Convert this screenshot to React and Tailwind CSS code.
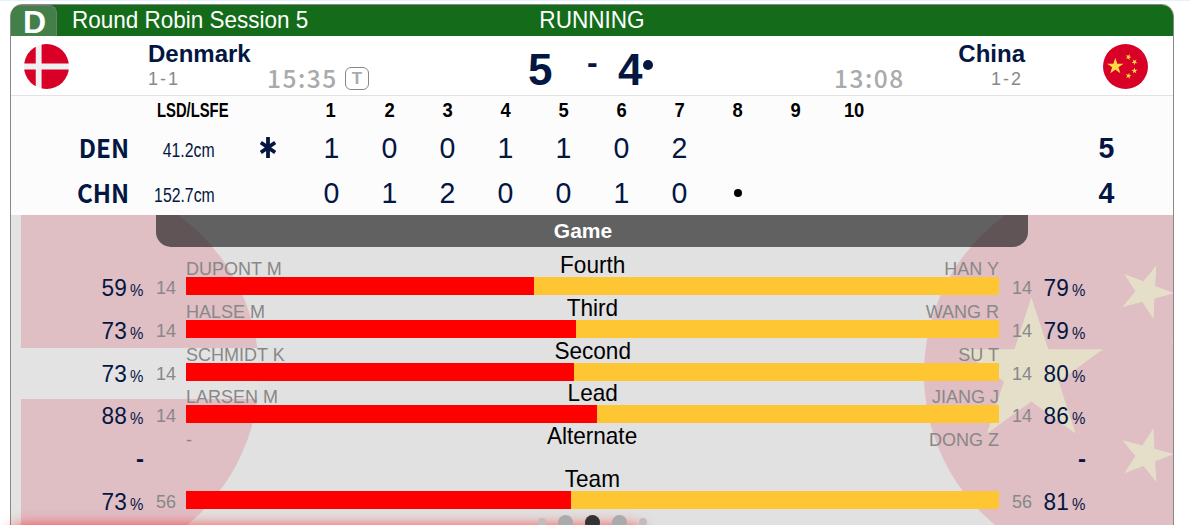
const ends = [1, 2, 3, 4, 5, 6, 7, 8, 9, 10];

const teams = [
  { code: "DEN", lsd: "41.2cm", hammer: true, scores: ["1", "0", "0", "1", "1", "0", "2", "", "", ""], total: 5 },
  { code: "CHN", lsd: "152.7cm", hammer: false, scores: ["0", "1", "2", "0", "0", "1", "0", "•", "", ""], total: 4 },
];

const rows = [
  { label: "Fourth", left: "DUPONT M", right: "HAN Y", shots: 14, a: 59, b: 79 },
  { label: "Third", left: "HALSE M", right: "WANG R", shots: 14, a: 73, b: 79 },
  { label: "Second", left: "SCHMIDT K", right: "SU T", shots: 14, a: 73, b: 80 },
  { label: "Lead", left: "LARSEN M", right: "JIANG J", shots: 14, a: 88, b: 86 },
  { label: "Alternate", left: "-", right: "DONG Z" },
  { label: "Team", left: "", right: "", shots: 56, a: 73, b: 81 },
];

function DenmarkFlag({ className }) {
  return (
    <svg viewBox="0 0 512 512" className={className}>
      <clipPath id="dk">
        <circle cx="256" cy="256" r="256" />
      </clipPath>
      <g clipPath="url(#dk)">
        <rect width="512" height="512" fill="#f0f0f0" />
        <path
          fill="#d80027"
          d="M0 0h133.6v222.6H0zM200.3 0H512v222.6H200.3zM0 289.4h133.6V512H0zM200.3 289.4H512V512H200.3z"
        />
      </g>
    </svg>
  );
}

function ChinaFlag({ className }) {
  return (
    <svg viewBox="0 0 512 512" className={className}>
      <circle cx="256" cy="256" r="256" fill="#d80027" />
      <g fill="#ffda44">
        <path d="M140.2 155.8l22.1 68h71.5l-57.9 42 22.1 68-57.8-42-57.9 42 22.1-68-57.8-42h71.5z" />
        <path d="M303.5 396.8l-16.9-20.7-25 9.6 14.5-22.5-16.9-20.8 25.9 6.9 14.5-22.5 1.4 26.8 25.9 6.9-25 9.6z" />
        <path d="M338 335.2l7.4-25.8-22.2-14.9 26.8-.4 7.3-25.8 8.6 25.4 26.8-.4-21.4 16.1 8.6 25.4-21.9-15.5z" />
        <path d="M338 175.8l7.4 25.8-22.2 14.9 26.8.4 7.3 25.8 8.6-25.4 26.8.4-21.4-16.1 8.6-25.4-21.9 15.5z" />
        <path d="M303.5 114.2l-16.9 20.7-25-9.6 14.5 22.5-16.9 20.8 25.9-6.9 14.5 22.5 1.4-26.8 25.9-6.9-25-9.6z" />
      </g>
    </svg>
  );
}

function Percent({ value }) {
  if (value === undefined) return <span className="font-bold">-</span>;
  return (
    <>
      <span className="inline-block origin-right scale-x-94">{value}</span>
      <span className="ml-[3px] inline-block w-[14px] text-left text-[16px]">
        <span className="inline-block origin-left scale-x-94">%</span>
      </span>
    </>
  );
}

function StatRow({ row }) {
  const hasBar = row.a !== undefined;
  return (
    <div className="flex h-[42.8px]">
      <div className="w-[133px] pt-[24px] text-right text-[24px] leading-[24px] whitespace-nowrap text-[#041642]">
        <Percent value={row.a} />
      </div>
      <div className="w-8 pt-[26px] text-right text-[18px] leading-[20px] text-[#888]">{row.shots}</div>
      <div className="ml-[10px] w-[813px]">
        <div className="grid h-[25px] grid-cols-3 text-[18px] leading-[35px] text-[#888]">
          <span>{row.left}</span>
          <span className="text-center text-[24px] leading-[25px] text-black">
            <span className="inline-block scale-x-94">{row.label}</span>
          </span>
          <span className="text-right">{row.right}</span>
        </div>
        {hasBar && (
          <div className="flex h-[18px] bg-[#ffc633]">
            <div className="bg-[#ff0000]" style={{ width: `${(row.a / (row.a + row.b)) * 100}%` }} />
          </div>
        )}
      </div>
      <div className="w-[33px] pt-[26px] text-right text-[18px] leading-[20px] text-[#888]">{row.shots}</div>
      <div className="w-[54px] pt-[24px] text-right text-[24px] leading-[24px] whitespace-nowrap text-[#041642]">
        <Percent value={row.b} />
      </div>
    </div>
  );
}

export default function App() {
  return (
    <div className="relative h-[525px] w-[1190px] overflow-hidden border-t border-[#e3f3fd] bg-white pt-[3px] font-['Liberation_Sans',Arial,sans-serif]">
      <div className="ml-[10px] h-[560px] w-[1164px] overflow-hidden rounded-t-[12px] border border-[#888] bg-white">
        {/* title bar */}
        <div className="flex h-[31px] items-center bg-[#146c1a] text-[24px] leading-[30px] text-white">
          <div className="flex h-full w-[46px] items-center justify-center rounded-tr-lg border-t border-r border-[#777] bg-[#437f48] pt-0.5 pl-0.5 text-[32px] font-bold">
            D
          </div>
          <div className="w-[468px] pb-0.5 pl-[15px]">
            <span className="inline-block origin-left scale-x-[0.937]">Round Robin Session 5</span>
          </div>
          <div className="w-[134px] pb-0.5 text-center">
            <span className="inline-block scale-x-94">RUNNING</span>
          </div>
        </div>

        {/* scoreboard */}
        <div className="flex h-[60px] border-b border-[#e2e2e2] text-[#041642]">
          <DenmarkFlag className="mt-2 ml-[13px] size-[45px]" />
          <div className="ml-[79px] w-[119px] pt-[6px]">
            <div className="text-[24px] leading-[24px] font-bold">Denmark</div>
            <div className="pt-[3px] text-[18px] leading-[20px] tracking-[2px] text-[#888]">1-1</div>
          </div>
          <div className="w-[78px] pt-[30px] font-['Noto_Sans_CJK_SC',sans-serif] text-[24.5px] leading-[24px] font-medium tracking-[1.5px] text-[#aaa]">
            15:35
          </div>
          <div className="mt-[31px] flex h-[23px] w-6 items-center justify-center rounded-md border border-[#888] pt-px text-[17px] font-bold text-[#aaa]">
            T
          </div>
          <div className="ml-[159px] w-[59px] pt-[10px] text-[44px] leading-[48px] font-bold">5</div>
          <div className="w-[31px] pt-[8px] text-[32px] leading-[36px] font-bold">-</div>
          <div className="flex w-[216px] pt-[10px] text-[44px] leading-[48px] font-bold">
            4<span className="mt-[14px] ml-[1px] size-[10px] rounded-full bg-[#041642]" />
          </div>
          <div className="w-[80px] pt-[30px] font-['Noto_Sans_CJK_SC',sans-serif] text-[24.5px] leading-[24px] font-medium tracking-[1.5px] text-[#aaa]">
            13:08
          </div>
          <div className="w-[111px] pt-[6px] text-right">
            <div className="text-[24px] leading-[24px] font-bold">China</div>
            <div className="pt-[3px] pr-0.5 text-[18px] leading-[20px] tracking-[2px] text-[#888]">1-2</div>
          </div>
          <ChinaFlag className="mt-2 ml-[78px] size-[45px]" />
        </div>

        {/* line score */}
        <div className="h-[119px] bg-[#fcfcfc] text-[#041642]">
          <div className="flex h-[29px] items-center pb-0.5 text-[20px] font-bold text-black">
            <div className="w-[291px] pl-[146px]">
              <span className="inline-block origin-left scale-x-74">LSD/LSFE</span>
            </div>
            {ends.map((end) => (
              <div key={end} className="w-[58.1px] text-center">
                <span className="inline-block scale-x-92">{end}</span>
              </div>
            ))}
          </div>
          {teams.map((team) => (
            <div key={team.code} className="flex h-[45px] items-center text-[30px] leading-[45px]">
              <div className="w-[118px] pb-0.5 text-right font-['Noto_Sans_CJK_SC',sans-serif] text-[26px] font-bold">
                <span className="inline-block origin-right scale-x-93">{team.code}</span>
              </div>
              <div className="w-[86px] pt-[6px] text-right text-[20px]">
                <span className="inline-block origin-right scale-x-79">{team.lsd}</span>
              </div>
              <div className="flex w-[87px] justify-center pl-[18px]">
                {team.hammer && (
                  <svg viewBox="0 0 16 21" className="h-[21px] w-4" stroke="#041642" strokeWidth="3.8">
                    <path d="M8 0v21M.8 5.5l14.4 10M15.2 5.5L.8 15.5" />
                  </svg>
                )}
              </div>
              {team.scores.map((score, i) => (
                <div key={i} className="flex w-[58.1px] items-center justify-center">
                  {score === "•" ? (
                    <span className="size-2 rounded-full bg-black" />
                  ) : (
                    <span className="inline-block scale-x-95">{score}</span>
                  )}
                </div>
              ))}
              <div className="ml-auto w-[134px] text-center font-bold">
                <span className="inline-block scale-x-95">{team.total}</span>
              </div>
            </div>
          ))}
        </div>

        {/* shot percentages */}
        <div className="relative h-[348px] overflow-hidden bg-[#e1e1e1]">
          <DenmarkFlag className="absolute top-[-37.5px] left-[-143.5px] size-[391px] opacity-15" />
          <ChinaFlag className="absolute top-[-37.5px] left-[912.5px] size-[392px] opacity-15" />
          <div className="relative">
            <div className="ml-[145px] h-8 w-[872px] rounded-b-[15px] bg-[#111]/62 pr-[18px] text-center text-[21px] leading-[32px] font-bold text-white">
              Game
            </div>
            <div className="pt-[5px]">
              {rows.map((row) => (
                <StatRow key={row.label} row={row} />
              ))}
            </div>
            <div className="relative z-10 flex items-center gap-[12px] pt-[6px] pl-[526.5px]">
              <span className="size-2 rounded-full bg-[#c4bcbc]" />
              <span className="size-[15px] rounded-full bg-[#aaa]" />
              <span className="size-[15px] rounded-full bg-[#333]" />
              <span className="size-[15px] rounded-full bg-[#aaa]" />
              <span className="size-2 rounded-full bg-[#c4bcbc]" />
            </div>
          </div>
        </div>
      </div>

      {/* glow of the next card */}
      <div className="absolute top-[526px] left-[10px] h-10 w-[634px] rounded-[12px] shadow-[0_0_15px_rgba(255,0,0,0.8)]" />
    </div>
  );
}
